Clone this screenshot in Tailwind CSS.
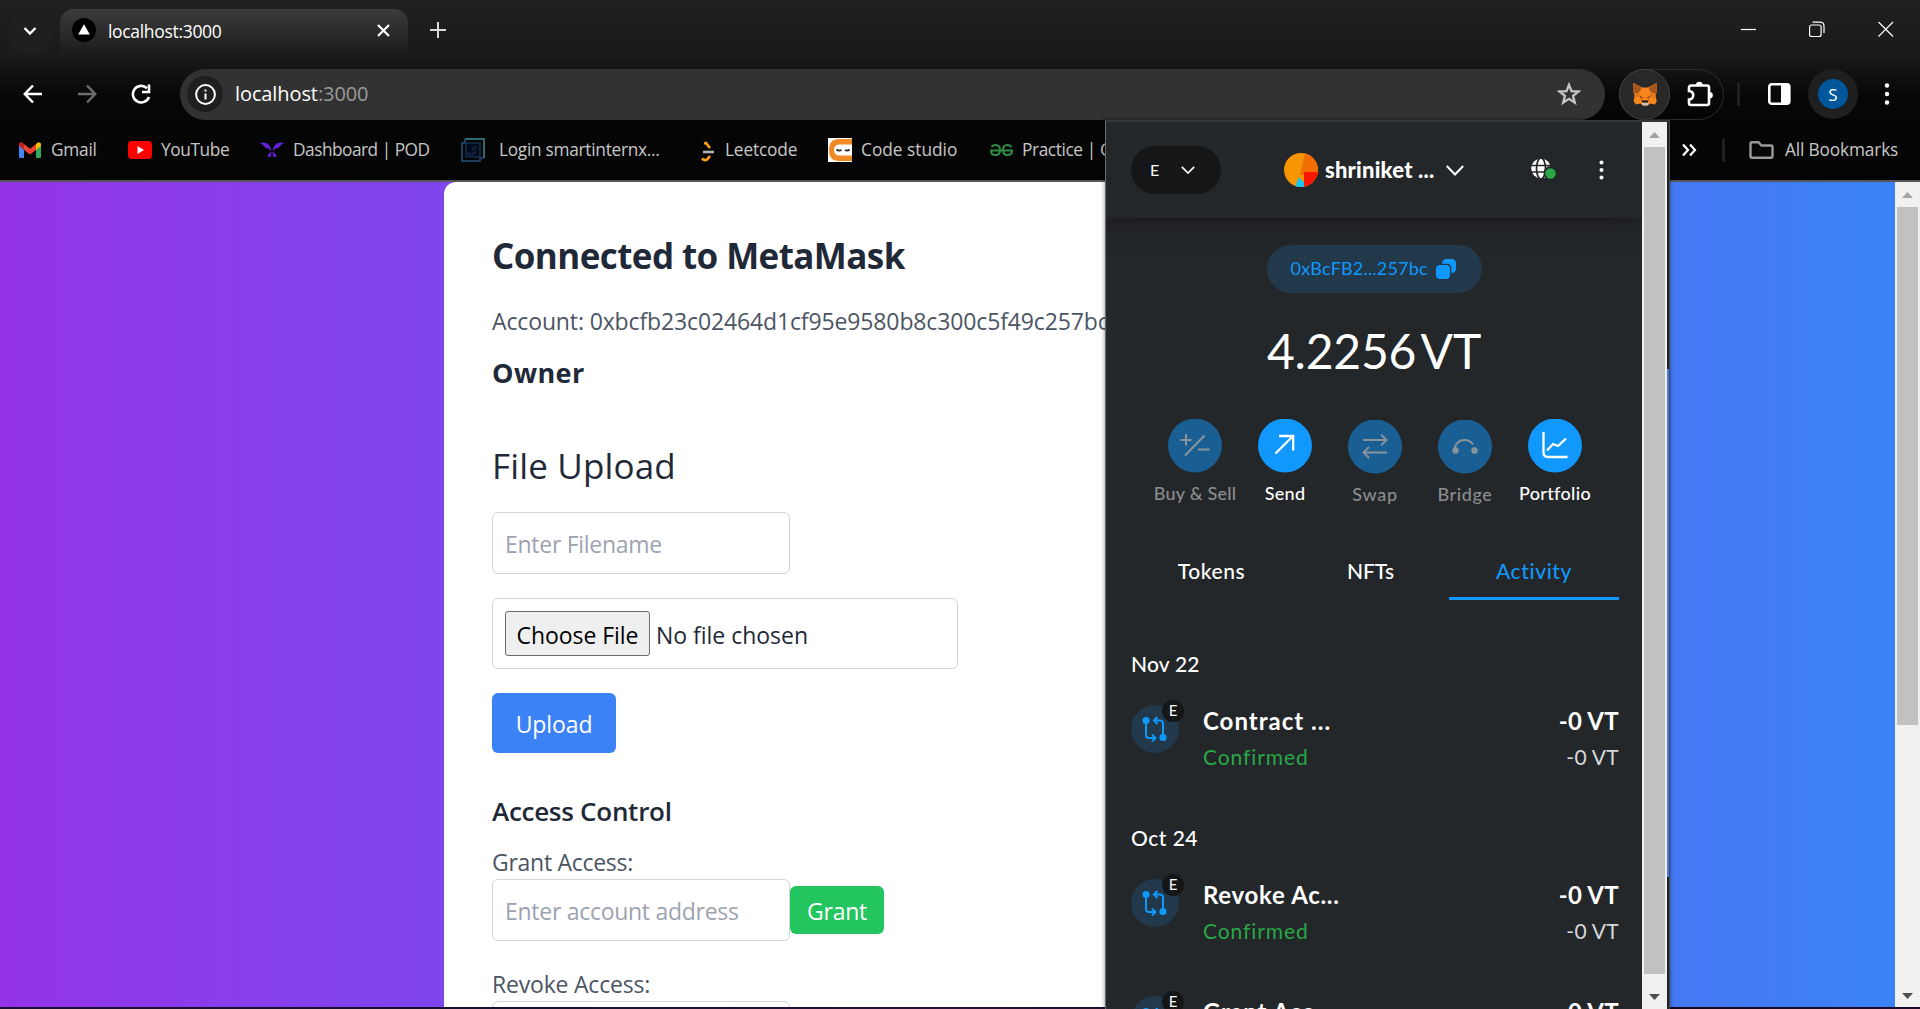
<!DOCTYPE html>
<html lang="en">
<head>
<meta charset="utf-8">
<title>localhost:3000</title>
<script src="https://cdn.jsdelivr.net/npm/@tailwindcss/browser@4"></script>
</head>
<body class="relative flex h-[1009px] w-[1920px] flex-col overflow-hidden bg-black font-['Open_Sans',sans-serif] whitespace-nowrap">

<!-- Tab strip -->
<header class="flex h-[60px] shrink-0 items-start bg-linear-to-b from-[#202020] to-[#1a1a1a] pt-[9px] text-white">
  <div class="ml-[9px] mt-px flex h-[42px] w-[42px] items-center justify-center rounded-[14px] bg-[#1f1f1f]">
    <svg class="h-[10px] w-[14px]" viewBox="0 0 14 10" fill="none" stroke="#fff" stroke-width="2.4"><path d="M1.5 2 7 7.5 12.5 2"/></svg>
  </div>
  <div class="ml-[9px] flex h-[51px] w-[348px] items-start rounded-t-[14px] bg-linear-to-b from-[#3c3c3c] to-[#181818]">
    <svg class="ml-[12px] mt-[9px] h-[24px] w-[24px] shrink-0" viewBox="0 0 24 24"><circle cx="12" cy="12" r="12" fill="#000"/><path d="M12 6.2 17.8 16.4H6.2z" fill="#fff"/></svg>
    <span class="ml-[12px] mt-[10px] w-[150px] shrink-0 text-[17.5px] leading-[24px] tracking-[-0.32px]">localhost:3000</span>
    <svg class="ml-[119px] mt-[15px] h-[13px] w-[13px] shrink-0" viewBox="0 0 13 13" stroke="#fff" stroke-width="2.2"><path d="M1 1 12 12M12 1 1 12"/></svg>
  </div>
  <svg class="ml-[22px] mt-[13px] h-[16px] w-[16px]" viewBox="0 0 16 16" stroke="#d8d8d8" stroke-width="2"><path d="M8 0V16M0 8H16"/></svg>
  <svg class="ml-[1295px] mt-[12px] h-[17px] w-[156px]" viewBox="0 0 156 17" fill="none" stroke="#fff" stroke-width="1.2"><path d="M0 8.5H15"/><rect x="68.6" y="4" width="11.5" height="11.5" rx="2"/><path d="M71.5 1.2H79q4 0 4 4V12"/><path d="M137.5 1 152 15.500M152 1 137.500 15.500"/></svg>
</header>

<!-- Address bar -->
<div class="flex h-[60px] shrink-0 items-center bg-linear-to-b from-[#181818] via-[#070707] via-60% to-[#050505] pt-[8px]">
  <svg class="ml-[23px] h-[20px] w-[20px]" viewBox="0 0 20 20" fill="none" stroke="#fff" stroke-width="2.5"><path d="M19 10H2M10 1.500 1.800 10 10 18.500"/></svg>
  <svg class="ml-[34px] h-[20px] w-[20px]" viewBox="0 0 20 20" fill="none" stroke="#6d6d6d" stroke-width="2.5"><path d="M1 10H18M10 1.500 18.200 10 10 18.500"/></svg>
  <svg class="ml-[34px] h-[20px] w-[20px]" viewBox="0 0 20 20" fill="none" stroke="#fff" stroke-width="2.600"><path d="M18 13A8.300 8.300 0 1 1 16 4.200"/><path d="M18 .5V8H11" /></svg>
  <div class="ml-[29px] flex h-[51px] w-[1425px] items-center rounded-full bg-[#323232]">
    <div class="ml-[7px] flex h-[36px] w-[36px] items-center justify-center rounded-full bg-[#1f1f1f]">
      <svg class="h-[21px] w-[21px]" viewBox="0 0 21 21" fill="none" stroke="#fff" stroke-width="2"><circle cx="10.500" cy="10.500" r="9.400"/><path d="M10.500 9.500V15.500M10.500 5.500V7.500"/></svg>
    </div>
    <span class="ml-[12px] w-[600px] text-[20px] leading-[28px] tracking-[-0.1px] text-[#9b9b9b]"><span class="text-white">localhost</span>:3000</span>
    <svg class="ml-[722px] h-[24px] w-[24px]" viewBox="0 0 24 24" fill="none" stroke="#c7c7c7" stroke-width="2.300"><path d="M12 2.800 14.500 9.200 21.300 9.600 16 13.900 17.800 20.600 12 16.900 6.200 20.600 8 13.900 2.700 9.600 9.500 9.200z"/></svg>
  </div>
  <div class="ml-[14px] flex h-[51px] w-[105px] items-center rounded-full border border-[#2d2d2d]">
    <div class="-ml-px flex h-[51px] w-[51px] items-center justify-center rounded-full border border-[#444] bg-[#282828]">
      <svg class="h-[23px] w-[24px]" viewBox="0 0 24 23"><path fill="#f6851b" d="M.5 0 9 4.500h6L23.500 0l.5 8-1.500 5 1.300 5-1.800 3.500-4.500-1-3 2h-4l-3-2-4.500 1L.5 18 1.700 13 0 8z"/><path fill="#a4561c" d="M.5 0l8 5L6 9.500 1 11 0 8zM23.500 0l-8 5L18 9.500l5 1.500 1-3z"/><path fill="#e2761b" d="M6 9.500l-5 4 1 1 6-1zM18 9.500l5 4-1 1-6-1z"/><path fill="#cd6116" d="M7.500 17.500l1.500-2.500.8 3.500zM16.500 17.500l-1.500-2.500-.8 3.500z"/><path fill="#6b3a1c" d="M6.500 13l4 1.500-3 .5zM17.500 13l-4 1.500 3 .5z"/><path fill="#d7c1b3" d="M8 19.500h8l-1.500 3h-5z"/><path fill="#161616" d="M9.300 17.500h5.400l.5 2H8.800z"/></svg>
    </div>
    <svg class="ml-[17px] h-[26px] w-[27px]" viewBox="0 0 27 26" fill="none" stroke="#fff" stroke-width="2.600"><path d="M4 4.500H20a2 2 0 0 1 2 2V22a2 2 0 0 1-2 2H4a2 2 0 0 1-2-2V18.500a4.200 4.200 0 0 0 0-8.500V6.500a2 2 0 0 1 2-2z"/><path d="M9 4a3.300 3.300 0 0 1 6.600 0zM22.500 11a3.300 3.300 0 0 1 0 6.600z" fill="#fff" stroke="none"/></svg>
  </div>
  <div class="ml-[13px] h-[24px] w-[3px] rounded bg-[#202020]"></div>
  <svg class="ml-[28px] h-[22px] w-[23px]" viewBox="0 0 23 22"><rect x="1.300" y="1.300" width="20" height="19.400" rx="2.500" fill="none" stroke="#fff" stroke-width="2.600"/><path fill="#fff" d="M13 1h8v20h-8z"/></svg>
  <div class="ml-[17px] flex h-[50px] w-[50px] items-center justify-center rounded-full bg-[#1f1f1f]"><div class="flex h-[30px] w-[30px] items-center justify-center rounded-full bg-[#01579b] pt-px text-[17px] leading-[30px] text-white">S</div></div>
  <svg class="ml-[26px] h-[22px] w-[6px]" viewBox="0 0 6 22" fill="#fff"><circle cx="3" cy="2.500" r="2.200"/><circle cx="3" cy="11" r="2.200"/><circle cx="3" cy="19.500" r="2.200"/></svg>
</div>

<!-- Bookmarks bar -->
<nav class="flex h-[62px] shrink-0 items-center border-b-2 border-[#555] bg-[#050505] pl-[18px] text-[17.300px] leading-[24px] tracking-[-0.15px] text-[#c7c7c7]">
  <div class="flex w-[110px] shrink-0 items-center tracking-[-0.25px]"><svg class="mr-[9px] h-[18px] w-[24px]" viewBox="0 0 24 18"><path fill="#4285f4" d="M1 3v13q0 1 1 1h4V7z"/><path fill="#34a853" d="M23 3v13q0 1-1 1h-4V7z"/><path fill="#fbbc04" d="M18 3.500V9l5-4V3q-1-3-4-1z"/><path fill="#c5221f" d="M6 3.500V9L1 5V3q1-3 4-1z"/><path fill="#ea4335" d="M6 3l6 4.700L18 3v6l-6 4.500L6 9z"/></svg>Gmail</div>
  <div class="flex w-[132px] shrink-0 items-center tracking-[-0.4px]"><svg class="mr-[9px] h-[18px] w-[24px]" viewBox="0 0 24 18"><rect width="24" height="18" rx="4" fill="#f00"/><path d="M9.500 5 16 9 9.500 13z" fill="#fff"/></svg>YouTube</div>
  <div class="flex w-[201px] shrink-0 items-center tracking-[-0.5px]"><svg class="mr-[9px] h-[16px] w-[24px]" viewBox="0 0 24 16" fill="#6320d8"><path d="M0 1Q10-1.500 11.300 9.500 9 6 5 5.500 3 2 0 1zM24 1Q14-1.500 12.700 9.500 15 6 19 5.500 21 2 24 1zM11.300 9.500q.5 4.500-1.500 6-3-.5-1.800-2.800zM12.700 9.500q-.5 4.500 1.500 6 3-.5 1.800-2.800z"/></svg>Dashboard | POD</div>
  <div class="flex w-[231px] shrink-0 items-center tracking-[-0.28px]"><svg class="mr-[14px] h-[24px] w-[24px]" viewBox="0 0 24 24" fill="none" stroke-width="1.500"><path d="M4 1H23V20" stroke="#3a8c95"/><path d="M4 1V5H1V23H19V20H23" stroke="#27507a"/><path d="M5 5H19V19H5z" stroke="#14304b" fill="#050b1c"/><path d="M5 18 9 15M11 12 15 9M10 17 15 14" stroke="#122043" stroke-width="3"/></svg>Login smartinternx...</div>
  <div class="flex w-[136px] shrink-0 items-center"><svg class="mr-[9px] h-[24px] w-[24px]" viewBox="0 0 24 24" fill="none" stroke-width="2.600"><path d="M12 5.500 14 5 18 10M10 20.500q3 3 5.500.5l2.500-3" stroke="#ffa116"/><path d="M11 14H22" stroke="#b3b3b3"/></svg>Leetcode</div>
  <div class="flex w-[162px] shrink-0 items-center tracking-normal"><svg class="mr-[9px] h-[24px] w-[24px]" viewBox="0 0 24 24"><path fill="#fff" d="M0 0h24v24H0z"/><path fill="#f08a24" d="M24 1v5.500H12q-6 0-6 5.500t6 5.500h12V23H11Q1 23 1 12T11 1z"/><path d="M8.500 11.500q2.500 2 5 .5M17 12q2.500 1.500 4.500-.5" stroke="#222" stroke-width="1.800" fill="none"/></svg>Code studio</div>
  <div class="flex w-[120px] shrink-0 items-center overflow-hidden tracking-[-0.4px]"><svg class="mr-[9px] h-[12px] w-[23px] shrink-0" viewBox="0 0 23 12" fill="none" stroke="#2f8d46" stroke-width="2"><path d="M1.500 3Q3 1 5.500 1q4.500 0 4.500 5t-4.500 5Q1 11 1 6.500H22Q22 11 17.500 11 13 11 13 6t4.500-5Q20 1 21.500 3"/></svg>Practice | GeeksforGeeks</div>
  <svg class="ml-[572px] h-[14px] w-[15px] shrink-0" viewBox="0 0 15 14" fill="none" stroke="#fff" stroke-width="2.200"><path d="M1 1.500 6 7 1 12.500M8 1.500 13 7 8 12.500"/></svg>
  <div class="ml-[25px] h-[24px] w-[3px] shrink-0 rounded bg-[#202020]"></div>
  <svg class="ml-[24px] h-[18px] w-[25px] shrink-0" viewBox="0 0 25 18" fill="none" stroke="#9a9a9a" stroke-width="2.400"><path d="M1.500 15V3Q1.500 1.300 3 1.300H9.500L12.500 4.500H22Q23.500 4.500 23.500 6V15Q23.500 16.700 22 16.700H3Q1.500 16.700 1.500 15z"/></svg>
  <span class="ml-[11px]">All Bookmarks</span>
</nav>

<!-- Page -->
<main class="flex h-[825px] shrink-0 overflow-hidden">
  <div class="flex-1 bg-[linear-gradient(to_right,#9333ea,#3b82f6)] pl-[444px]">
    <div class="h-[900px] w-[1007px] rounded-[12px] bg-white pl-[48px] pt-[48px] text-[23px] tracking-[-0.28px] text-[#1f2937]">
      <h1 class="w-max text-[35px] leading-[51px] font-bold tracking-[-0.58px]">Connected to MetaMask</h1>
      <p class="mt-[22px] leading-[36px] tracking-[-0.13px] text-[#4b5563]">Account: 0xbcfb23c02464d1cf95e9580b8c300c5f49c257bc</p>
      <p class="mt-[13px] text-[27px] leading-[42px] font-bold tracking-[0.4px]">Owner</p>
      <h2 class="mt-[48px] text-[35px] leading-[48px] font-medium tracking-[0.15px]">File Upload</h2>
      <div class="mt-[22px] flex h-[62px] w-[298px] items-center rounded-[6px] border border-[#d1d5db] pt-[2px] pl-[12px] text-[#9ca3af]">Enter Filename</div>
      <div class="mt-[24px] flex h-[71px] w-[466px] items-center rounded-[6px] border border-[#d1d5db] pl-[12px]">
        <div class="flex h-[45px] w-[145px] items-center justify-center rounded-[3px] border border-[#6b6b6b] bg-[#efefef] pt-[3px] tracking-[-0.05px] text-black">Choose File</div>
        <span class="ml-[6px] pt-[3px] tracking-[-0.02px]">No file chosen</span>
      </div>
      <div class="mt-[24px] flex h-[60px] w-[124px] items-center justify-center rounded-[6px] bg-[#3b82f6] pt-[2px] tracking-[-0.1px] text-white">Upload</div>
      <h3 class="mt-[38px] text-[26px] leading-[41px] font-semibold">Access Control</h3>
      <p class="mt-[13px] leading-[35px] text-[#4b5563]">Grant Access:</p>
      <div class="-mt-px flex items-center">
        <div class="flex h-[62px] w-[298px] items-center rounded-[6px] border border-[#d1d5db] pt-[2px] pl-[12px] text-[#9ca3af]">Enter account address</div>
        <div class="flex h-[48px] w-[94px] items-center justify-center rounded-[6px] bg-[#22c55e] pt-[2px] text-white">Grant</div>
      </div>
      <p class="mt-[26px] leading-[35px] tracking-[-0.2px] text-[#4b5563]">Revoke Access:</p>
      <div class="-mt-px h-[62px] w-[298px] rounded-[6px] border border-[#d1d5db]"></div>
    </div>
  </div>
  <div class="flex w-[25px] flex-col items-center bg-[#f1f1f1]">
    <svg class="mt-[10px] h-[6px] w-[11px]" viewBox="0 0 11 6"><path fill="#a3a3a3" d="M5.500 0 11 6H0z"/></svg>
    <div class="mt-[9px] h-[518px] w-[21px] bg-[#c1c1c1]"></div>
    <svg class="mt-[268px] h-[6px] w-[11px]" viewBox="0 0 11 6"><path fill="#505050" d="M5.500 6 11 0H0z"/></svg>
  </div>
</main>
<div class="h-[2px] shrink-0 bg-[linear-gradient(to_right,#1a0f33,#15102e,#2a1338,#0b0716,#1d0a2b)]"></div>

<!-- Wallet popup -->
<aside class="absolute top-[120px] left-[1105px] flex h-[889px] w-[565px] overflow-hidden border-t-2 border-r border-l border-t-[#33373a] border-r-[#4a4a4a] border-l-[#6b6b6b] bg-[#24272a] font-[Lato,sans-serif] text-white shadow-[0_0_4px_rgba(0,0,0,.5)]">
  <div class="w-[536px] shrink-0">
    <div class="flex h-[96px] items-center shadow-[0_2px_24px_rgba(20,20,24,.9)]">
      <div class="ml-[25px] flex h-[48px] w-[90px] items-center rounded-full bg-[#141618] pl-[19px] text-[16px]"><span class="w-[31px]">E</span><svg class="h-[8px] w-[14px]" viewBox="0 0 14 8" fill="none" stroke="#fff" stroke-width="1.700"><path d="M.8.8 7 7 13.200.8"/></svg></div>
      <svg class="ml-[63px] h-[34px] w-[34px] rounded-full" viewBox="0 0 34 34"><path fill="#f79503" d="M0 0h34v34H0z"/><path fill="#f26e02" d="M21 0h13v22H16z"/><path fill="#fb1500" d="M20 19h14v15H20z"/><path fill="#18c6f3" d="M14.500 24.500 20 29V34H11z"/></svg>
      <span class="ml-[7px] w-[121px] text-[22px] leading-[32px] font-black tracking-[0.2px]">shriniket ...</span>
      <svg class="h-[11px] w-[18px]" viewBox="0 0 18 11" fill="none" stroke="#fff" stroke-width="2"><path d="M.8 1 9 9.500 17.200 1"/></svg>
      <svg class="ml-[67px] h-[22px] w-[26px]" viewBox="0 0 26 22"><circle cx="10" cy="9.500" r="9.800" fill="#fff"/><path d="M0 6.500H20M0 13H20" stroke="#24272a" stroke-width="1.700"/><ellipse cx="10" cy="9.500" rx="4.500" ry="10.500" fill="none" stroke="#24272a" stroke-width="1.700"/><circle cx="19.500" cy="14" r="7" fill="#24272a"/><circle cx="19.500" cy="14.500" r="5.200" fill="#28a745"/></svg>
      <svg class="ml-[42px] h-[20px] w-[5px]" viewBox="0 0 5 20" fill="#fff"><circle cx="2.500" cy="2.500" r="2"/><circle cx="2.500" cy="10" r="2"/><circle cx="2.500" cy="17.500" r="2"/></svg>
    </div>
    <div class="mx-auto mt-[27px] flex h-[48px] w-[215px] items-center rounded-full bg-[#22384b] pl-[24px] text-[18px] text-[#1098fc]"><span class="w-[145px] pb-[2px] tracking-[0.2px]">0xBcFB2...257bc</span><svg class="h-[20px] w-[20px]" viewBox="0 0 20 20" fill="#1098fc"><rect y="6" width="14" height="14" rx="4"/><path d="M6 4.800Q6.500 0 10.500 0H15.500Q20 0 20 4.500V9.500Q20 13.800 15.300 14V9Q15 4.800 11 4.800z"/></svg></div>
    <div class="mt-[28px] text-center text-[48px] leading-[60px] tracking-[-0.2px] [word-spacing:-6px]">4.2256 VT</div>
    <div class="mt-[38px] ml-[44px] flex h-[90px] text-[18px] leading-[24px] font-medium *:flex *:w-[90px] *:flex-col *:items-center">
      <div class="tracking-[0.2px] text-[#8b8c8e]"><svg class="mb-[8px] h-[54px] w-[54px]" viewBox="0 0 54 54" fill="none" stroke="#8b949b" stroke-width="2"><circle cx="27" cy="26.500" r="27" fill="#1a5f93" stroke="none"/><path d="M12.500 21H23.500M18 15V26.500M17 36.500 36.500 16.500M30 30.500H41.500"/></svg>Buy &amp; Sell</div>
      <div class="tracking-[0.3px]"><svg class="mb-[8px] h-[54px] w-[54px]" viewBox="0 0 54 54" fill="none" stroke="#fff" stroke-width="2.300"><circle cx="27" cy="26.500" r="27" fill="#1098fc" stroke="none"/><path d="M17.500 34.500 35 17M21 17H35.200V31.500"/></svg>Send</div>
      <div class="mt-px tracking-[0.7px] text-[#8b8c8e]"><svg class="mb-[8px] h-[54px] w-[54px]" viewBox="0 0 54 54" fill="none" stroke="#8b949b" stroke-width="1.800"><circle cx="27" cy="26.500" r="27" fill="#1a5f93" stroke="none"/><path d="M15 20H38M33 14.500 38.500 20 33 25.500M39 32.500H16M21 27 15.500 32.500 21 38"/></svg>Swap</div>
      <div class="mt-px tracking-[0.6px] text-[#8b8c8e]"><svg class="mb-[8px] h-[54px] w-[54px]" viewBox="0 0 54 54" fill="none" stroke="#8b949b" stroke-width="2"><circle cx="27" cy="26.500" r="27" fill="#1a5f93" stroke="none"/><path d="M16.500 29Q18.500 20 27 20 32 20 35 24.500"/><circle cx="17.500" cy="30.500" r="2.200" fill="#8b949b"/><circle cx="36.500" cy="30.500" r="2.200" fill="#8b949b"/></svg>Bridge</div>
      <div class="tracking-[0.35px]"><svg class="mb-[8px] h-[54px] w-[54px]" viewBox="0 0 54 54" fill="none" stroke="#fff" stroke-width="2.300"><circle cx="27" cy="26.500" r="27" fill="#1098fc" stroke="none"/><path d="M15.500 13V33.500Q15.500 38 20 38H39.500M19 31.500 25 25 30 27 38 19.500"/></svg>Portfolio</div>
    </div>
    <div class="mt-[36px] ml-[25px] flex h-[55px] text-center text-[21px] leading-[52px] font-medium">
      <div class="w-[161px] tracking-[0.6px]">Tokens</div>
      <div class="w-[157px]">NFTs</div>
      <div class="w-[170px] border-b-3 border-[#1098fc] tracking-[0.6px] text-[#1098fc]">Activity</div>
    </div>
    <div class="mt-[48px] ml-[25px] text-[21px] leading-[32px] font-medium tracking-[0.2px]">Nov 22</div>
    <div class="mt-[23px] ml-[25px] flex h-[119px] w-[488px]">
      <div class="relative mt-[2px] h-[48px] w-[48px] rounded-full bg-[#22384b]"><svg class="absolute top-[11px] left-[11px] h-[27px] w-[26px]" viewBox="0 0 26 27" fill="none" stroke="#1098fc" stroke-width="2"><circle cx="4" cy="4.500" r="2.600" fill="#1098fc"/><path d="M4 5V19Q4 22 7 22H13M10 18.500 13.500 22 10 25.500"/><circle cx="21" cy="21.500" r="2.600" fill="#1098fc"/><path d="M21 21V7.500Q21 4.500 18 4.500H12M15.500 1 12 4.500 15.500 8"/></svg><div class="absolute -top-[5px] left-[31px] flex h-[22px] w-[22px] items-center justify-center rounded-full bg-[#141618] pb-px text-[15px]">E</div></div>
      <div class="ml-[24px] flex-1"><div class="text-[24px] leading-[36px] font-bold tracking-[1px]">Contract ...</div><div class="mt-px text-[21px] leading-[33px] tracking-[0.9px] text-[#28a745]">Confirmed</div></div>
      <div class="text-right"><div class="text-[24px] leading-[36px] font-bold tracking-[0.3px]">-0 VT</div><div class="mt-px text-[21px] leading-[33px] tracking-[0.3px] text-[#d6d9dc]">-0 VT</div></div>
    </div>
    <div class="ml-[25px] text-[21px] leading-[32px] font-medium tracking-[0.5px]">Oct 24</div>
    <div class="mt-[23px] ml-[25px] flex h-[117px] w-[488px]">
      <div class="relative mt-[2px] h-[48px] w-[48px] rounded-full bg-[#22384b]"><svg class="absolute top-[11px] left-[11px] h-[27px] w-[26px]" viewBox="0 0 26 27" fill="none" stroke="#1098fc" stroke-width="2"><circle cx="4" cy="4.500" r="2.600" fill="#1098fc"/><path d="M4 5V19Q4 22 7 22H13M10 18.500 13.500 22 10 25.500"/><circle cx="21" cy="21.500" r="2.600" fill="#1098fc"/><path d="M21 21V7.500Q21 4.500 18 4.500H12M15.500 1 12 4.500 15.500 8"/></svg><div class="absolute -top-[5px] left-[31px] flex h-[22px] w-[22px] items-center justify-center rounded-full bg-[#141618] pb-px text-[15px]">E</div></div>
      <div class="ml-[24px] flex-1"><div class="text-[24px] leading-[36px] font-bold tracking-[0.7px]">Revoke Ac...</div><div class="mt-px text-[21px] leading-[33px] tracking-[0.9px] text-[#28a745]">Confirmed</div></div>
      <div class="text-right"><div class="text-[24px] leading-[36px] font-bold tracking-[0.3px]">-0 VT</div><div class="mt-px text-[21px] leading-[33px] tracking-[0.3px] text-[#d6d9dc]">-0 VT</div></div>
    </div>
    <div class="ml-[25px] flex h-[117px] w-[488px]">
      <div class="relative mt-[2px] h-[48px] w-[48px] rounded-full bg-[#22384b]"><svg class="absolute top-[11px] left-[11px] h-[27px] w-[26px]" viewBox="0 0 26 27" fill="none" stroke="#1098fc" stroke-width="2"><circle cx="4" cy="4.500" r="2.600" fill="#1098fc"/><path d="M4 5V19Q4 22 7 22H13M10 18.500 13.500 22 10 25.500"/><circle cx="21" cy="21.500" r="2.600" fill="#1098fc"/><path d="M21 21V7.500Q21 4.500 18 4.500H12M15.500 1 12 4.500 15.500 8"/></svg><div class="absolute -top-[5px] left-[31px] flex h-[22px] w-[22px] items-center justify-center rounded-full bg-[#141618] pb-px text-[15px]">E</div></div>
      <div class="ml-[24px] flex-1 text-[24px] leading-[36px] font-bold tracking-[0.7px]">Grant Acc...</div>
      <div class="text-[24px] leading-[36px] font-bold tracking-[0.3px]">-0 VT</div>
    </div>
  </div>
  <div class="flex w-[25px] shrink-0 flex-col items-center bg-[#f1f1f1]">
    <svg class="mt-[10px] h-[6px] w-[11px]" viewBox="0 0 11 6"><path fill="#a3a3a3" d="M5.500 0 11 6H0z"/></svg>
    <div class="mt-[9px] h-[827px] w-[21px] bg-[#c1c1c1]"></div>
    <svg class="mt-[20px] h-[6px] w-[11px]" viewBox="0 0 11 6"><path fill="#505050" d="M5.500 6 11 0H0z"/></svg>
  </div>
  <div class="flex w-[2px] shrink-0 flex-col bg-[#1f2123]"><div class="mt-[247px] h-[508px] bg-[#4478f5]"></div></div>
</aside>
</body>
</html>
